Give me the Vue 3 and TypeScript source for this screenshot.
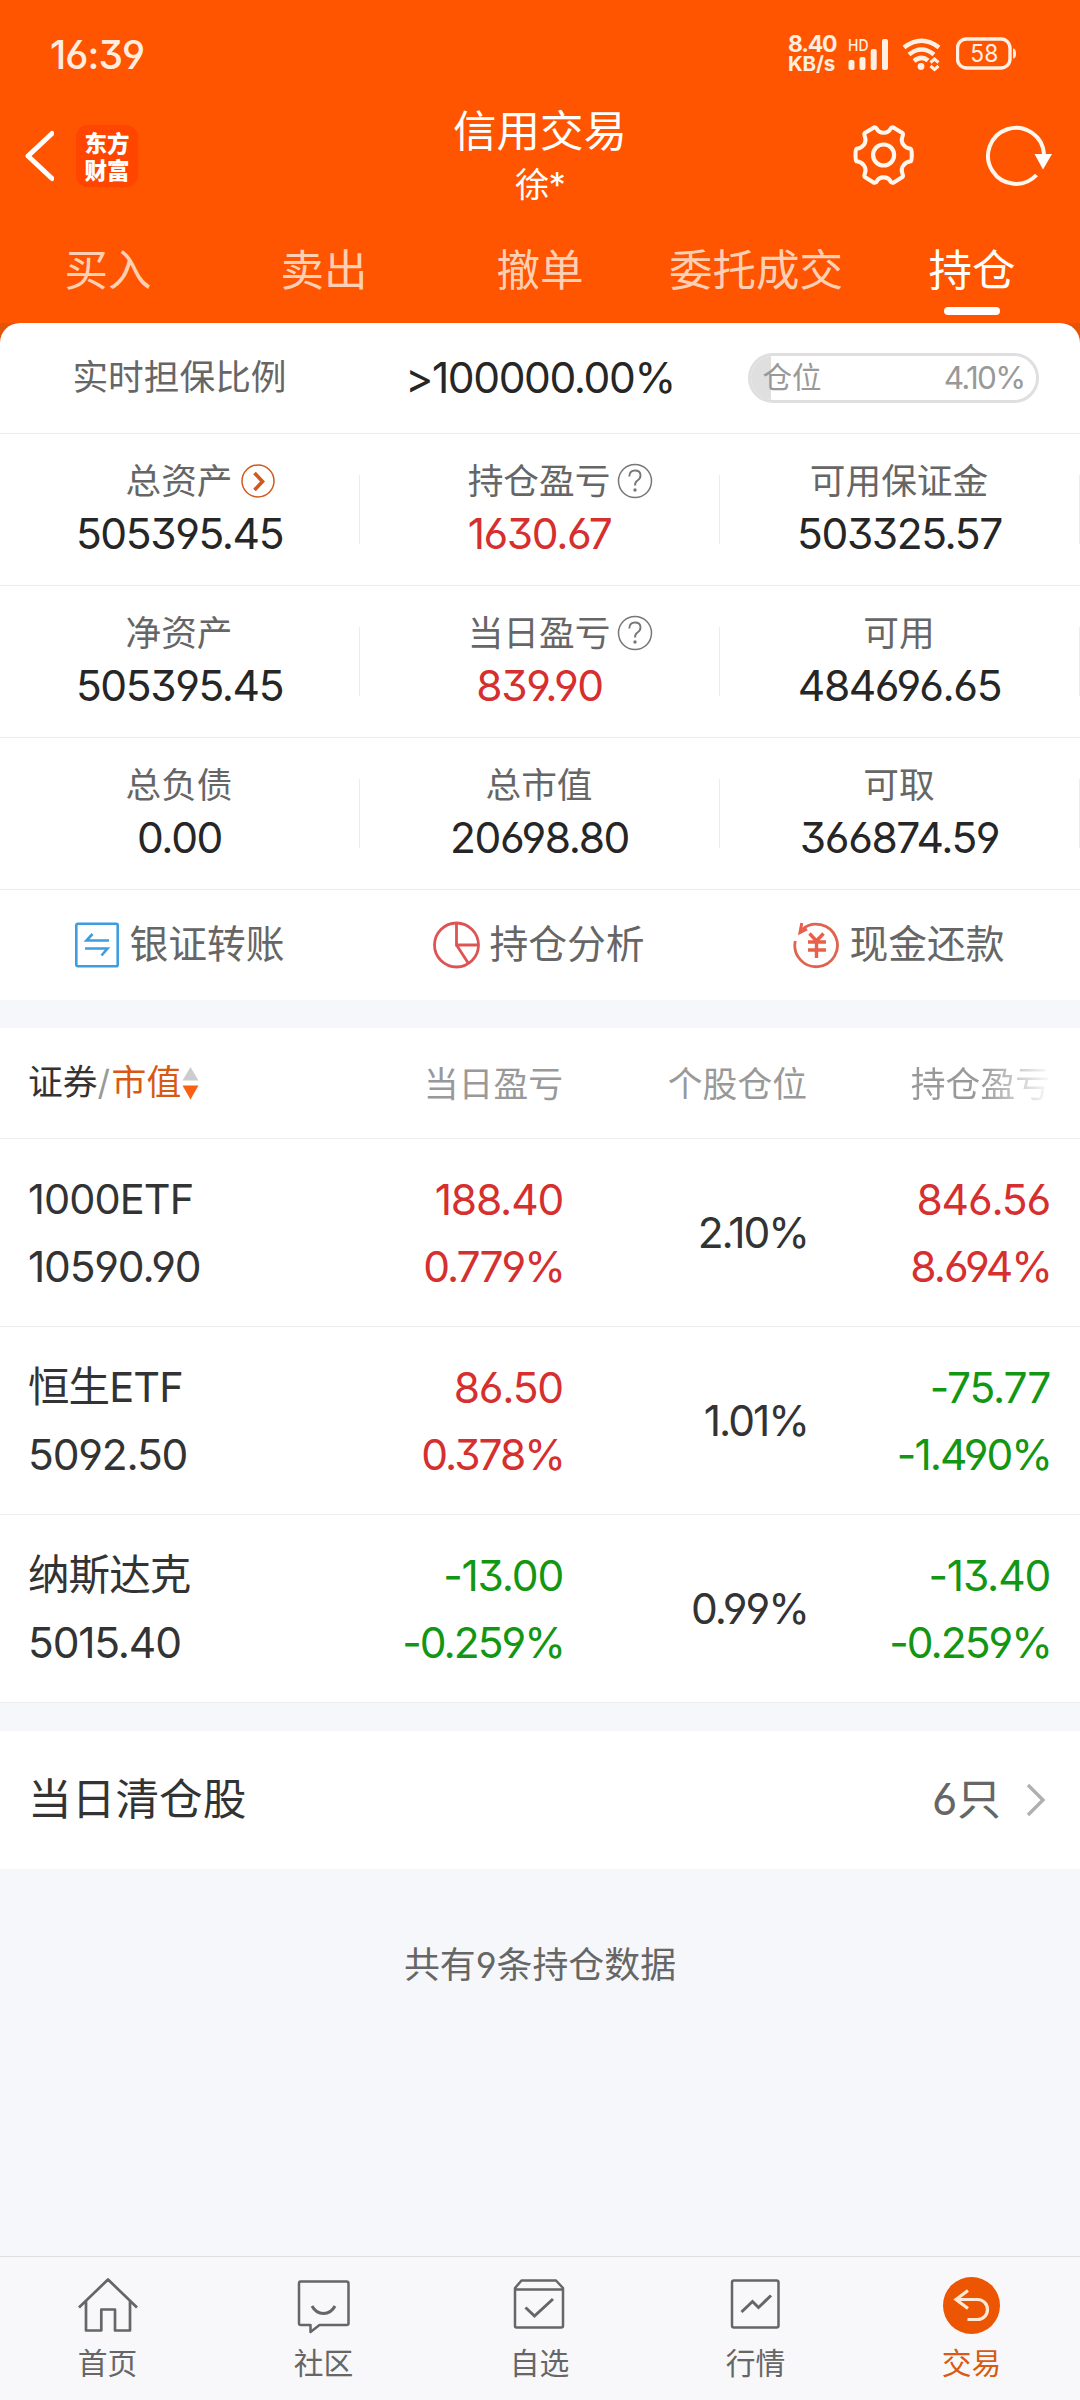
<script setup lang="ts">
interface Metric {
  label: string
  value: string
  tone?: 'up'
  mark?: 'more' | 'help'
}
interface Holding {
  name: string
  amount: string
  day: [string, string]
  share: string
  total: [string, string]
}

const tabs: string[] = ['买入', '卖出', '撤单', '委托成交', '持仓']
const activeTab = '持仓'

const metrics: Metric[][] = [
  [
    { label: '总资产', value: '505395.45', mark: 'more' },
    { label: '持仓盈亏', value: '1630.67', tone: 'up', mark: 'help' },
    { label: '可用保证金', value: '503325.57' },
  ],
  [
    { label: '净资产', value: '505395.45' },
    { label: '当日盈亏', value: '839.90', tone: 'up', mark: 'help' },
    { label: '可用', value: '484696.65' },
  ],
  [
    { label: '总负债', value: '0.00' },
    { label: '总市值', value: '20698.80' },
    { label: '可取', value: '366874.59' },
  ],
]

const holdings: Holding[] = [
  { name: '1000ETF', amount: '10590.90', day: ['188.40', '0.779%'], share: '2.10%', total: ['846.56', '8.694%'] },
  { name: '恒生ETF', amount: '5092.50', day: ['86.50', '0.378%'], share: '1.01%', total: ['-75.77', '-1.490%'] },
  { name: '纳斯达克', amount: '5015.40', day: ['-13.00', '-0.259%'], share: '0.99%', total: ['-13.40', '-0.259%'] },
]

const position = 4.1
const toneOf = (v: string): string[] => [v.startsWith('-') ? 'down' : 'up', v.endsWith('%') ? 'percent' : '']
</script>

<template>
  <div class="screen">
    <header class="top">
      <div class="status">
        <span class="clock">16:39</span>
        <div class="status-right">
          <div class="speed"><span class="rate">8.40</span><span class="unit">KB/s</span></div>
          <svg class="signal" width="42" height="36" viewBox="0 0 42 36" fill="#fff0e4">
            <text x="0" y="15" font-size="16.500" font-weight="500" textLength="20.500" lengthAdjust="spacingAndGlyphs">HD</text>
            <rect x="0.500" y="24" width="6" height="10" rx="2" />
            <rect x="11.500" y="21" width="6" height="13" rx="2" />
            <rect x="22.700" y="13" width="6" height="21" rx="2" />
            <rect x="34" y="3" width="6" height="31" rx="2" />
          </svg>
          <svg class="wifi" width="40" height="36" viewBox="0 0 40 36" fill="none" stroke="#fff0e4" stroke-width="4.600">
            <path d="M2 11.500 Q19.500 -2 37 11.500" />
            <path d="M7 18.500 Q19.500 8.500 32 18.500" />
            <path d="M12 25 Q19.500 19 26 24.500" />
            <circle cx="19" cy="30.500" r="3.400" fill="#fff0e4" stroke="none" />
            <path d="M28.500 26.500 L32.500 23 L36.500 26.500 M28.500 30 L32.500 33.500 L36.500 30" stroke-width="3" />
          </svg>
          <svg class="battery" width="62" height="34" viewBox="0 0 62 34" fill="none">
            <rect x="1.500" y="2" width="52.500" height="29" rx="9" stroke="#fff0e4" stroke-width="3.400" />
            <path d="M57 11.500 Q60 11.500 60 16.500 Q60 21.500 57 21.500 Z" fill="#fff0e4" />
            <text x="28.300" y="25" font-size="24.500" font-weight="400" fill="#fff0e4" text-anchor="middle" textLength="28" lengthAdjust="spacingAndGlyphs">58</text>
          </svg>
        </div>
      </div>

      <div class="titlebar">
        <div class="side">
          <svg class="back" width="34" height="52" viewBox="0 0 34 52" fill="none" stroke="#fff" stroke-width="5" stroke-linecap="round" stroke-linejoin="round">
            <path d="M32 3.500 L8 26 L32 48.500" />
          </svg>
          <div class="logo"><span>东方</span><span>财富</span></div>
        </div>
        <div class="title">
          <h1>信用交易</h1>
          <span>徐*</span>
        </div>
        <div class="side tools">
          <svg width="64" height="64" viewBox="0 0 64 64" fill="none" stroke="#fff6ee" stroke-width="4.200" stroke-linejoin="round">
            <path d="M22 3.500 Q24 3 25 5 Q27 9 32 9 Q37 9 39 5 Q40 3 42 3.500 L51 9 Q52.500 10 51.500 12.500 Q49.500 18 52.500 21.500 Q55 25 60 25.500 Q61 26 61 32 Q61 38 60 38.500 Q55 39 52.500 42.500 Q49.500 46 51.500 51.500 Q52.500 54 51 55 L42 60.500 Q40 61 39 59 Q37 55 32 55 Q27 55 25 59 Q24 61 22 60.500 L13 55 Q11.500 54 12.500 51.500 Q14.500 46 11.500 42.500 Q9 39 4 38.500 Q3 38 3 32 Q3 26 4 25.500 Q9 25 11.500 21.500 Q14.500 18 12.500 12.500 Q11.500 10 13 9 Z" transform="translate(0.600 0) scale(0.970)" />
            <circle cx="31.600" cy="31" r="10.500" />
          </svg>
          <svg width="68" height="64" viewBox="0 0 68 64" fill="none">
            <path d="M60 30 A28 28 0 1 0 52.500 51" stroke="#fff6ee" stroke-width="4" />
            <path d="M50.500 30 L68 30 L59 45.500 Z" fill="#fff" />
          </svg>
        </div>
      </div>

      <nav class="tabs">
        <div v-for="t in tabs" :key="t" class="tab" :class="{ on: t === activeTab }">
          <span>{{ t }}</span>
          <i></i>
        </div>
      </nav>
    </header>

    <section class="card-wrap">
      <div class="card">
        <div class="ratio">
          <span class="ratio-label">实时担保比例</span>
          <span class="num">&gt;100000.00%</span>
          <div class="pill">
            <div class="pill-fill" :style="{ width: position + 3.2 + '%' }"></div>
            <span>仓位</span><span class="pct">4.10%</span>
          </div>
        </div>
        <div v-for="(row, r) in metrics" :key="r" class="metric-row">
          <div v-for="m in row" :key="m.label" class="metric">
            <div class="label">
              {{ m.label }}
              <svg v-if="m.mark === 'more'" class="mark more" width="36" height="36" viewBox="0 0 36 36" fill="none" stroke="#cf5a1c">
                <circle cx="18" cy="18" r="16" stroke-width="1.500" />
                <path d="M14.500 10 L22.500 18.500 L14.500 27" stroke-width="3.600" />
              </svg>
              <svg v-if="m.mark === 'help'" class="mark help" width="36" height="36" viewBox="0 0 36 36" fill="none" stroke="#777">
                <circle cx="18" cy="18" r="16.500" stroke-width="1.500" />
                <path d="M12.300 13.500 Q12.500 7.500 18 7.500 Q23.500 7.500 23.500 12.500 Q23.500 15.500 20.500 17.500 Q18 19 18 22.500" stroke-width="1.900" />
                <circle cx="18" cy="27" r="1.700" fill="#777" stroke="none" />
              </svg>
            </div>
            <div class="num" :class="m.tone">{{ m.value }}</div>
          </div>
        </div>
        <div class="actions">
          <div class="action">
            <svg width="48" height="48" viewBox="0 0 48 48" fill="none" stroke="#3f9ddd" stroke-width="2.600">
              <rect x="3.300" y="2.800" width="41.400" height="42.500" rx="1.500" />
              <path d="M36 19.500 H13.500 L19.500 13 M12 27.500 H34.500 L28.500 34.500" />
            </svg>
            <span>银证转账</span>
          </div>
          <div class="action">
            <svg width="48" height="48" viewBox="0 0 48 48" fill="none" stroke="#dd5454" stroke-width="2.800">
              <circle cx="23.500" cy="24" r="22" />
              <path d="M23.500 2 V24 H45.500 M23.500 24 L35.500 42.500" />
            </svg>
            <span>持仓分析</span>
          </div>
          <div class="action">
            <svg width="48" height="48" viewBox="0 0 48 48" fill="none" stroke="#e8604a" stroke-width="2.800">
              <path d="M9 8.500 A21.300 21.300 0 1 1 2.300 20" stroke="#e06350" />
              <path d="M8.800 2 L7 11.500 L14 8" stroke-width="3" />
              <path d="M16.500 12.500 L23.500 20 L30.500 12.500 M15 21 H33 M15 29 H33 M23.500 20 V37" stroke-width="3.400" />
            </svg>
            <span>现金还款</span>
          </div>
        </div>
      </div>
    </section>

    <section class="table">
      <div class="thead">
        <div class="c1 sort">
          <span class="dark">证券</span><span class="slash">/</span><span class="orange">市值</span>
          <svg width="17" height="34" viewBox="0 0 17 34">
            <path d="M8.500 1 L16.500 14.500 H0.500 Z" fill="#ccc" />
            <path d="M8.500 33.500 L16.500 19.500 H0.500 Z" fill="#f96014" />
          </svg>
        </div>
        <div class="c2">当日盈亏</div>
        <div class="c3">个股仓位</div>
        <div class="c4 fade">持仓盈亏</div>
      </div>
      <div v-for="h in holdings" :key="h.name" class="trow">
        <div class="c1 pair"><span class="name">{{ h.name }}</span><span>{{ h.amount }}</span></div>
        <div class="c2 pair"><span v-for="v in h.day" :key="v" :class="toneOf(v)">{{ v }}</span></div>
        <div class="c3"><span class="percent">{{ h.share }}</span></div>
        <div class="c4 pair"><span v-for="v in h.total" :key="v" :class="toneOf(v)">{{ v }}</span></div>
      </div>
    </section>

    <section class="cleared">
      <span>当日清仓股</span>
      <div class="count">
        <span>6只</span>
        <svg width="20" height="34" viewBox="0 0 20 34" fill="none" stroke="#b0b0b0" stroke-width="3.400">
          <path d="M2 2 L17 17 L2 32" />
        </svg>
      </div>
    </section>

    <p class="summary">共有9条持仓数据</p>

    <nav class="dock">
      <div class="dock-item">
        <svg width="64" height="60" viewBox="0 0 64 60" fill="none" stroke="#666" stroke-width="2.700">
          <path d="M3 32.500 L32 4.500 L61 32.500 M10 26.500 V55.500 H25.300 V34.500 H39 V55.500 H54 V26.500" stroke-linejoin="round" />
        </svg>
        <span>首页</span>
      </div>
      <div class="dock-item">
        <svg width="64" height="60" viewBox="0 0 64 60" fill="none" stroke="#666" stroke-width="2.500">
          <path d="M8.500 6.500 H54.500 Q56.500 6.500 56.500 8.500 V48.500 Q56.500 50 54.500 50 H27.500 L18.500 57 V50 H9 Q7 50 7 48.500 V8.500 Q7 6.500 8.500 6.500 Z" stroke-linejoin="round" />
          <path d="M20 31 Q24 38.500 31.500 38.500 Q39 38.500 43 31" stroke-width="3" />
        </svg>
        <span>社区</span>
      </div>
      <div class="dock-item">
        <svg width="64" height="60" viewBox="0 0 64 60" fill="none" stroke="#666" stroke-width="2.500" stroke-linejoin="round">
          <path d="M13.500 5.500 H48 L55 13 V51 Q55 52.500 53 52.500 H8.500 Q7 52.500 7 51 V13 Z M7 14.500 H55" />
          <path d="M17.500 32.500 L26.500 41 L45 24" stroke-width="3" stroke-linejoin="miter" />
        </svg>
        <span>自选</span>
      </div>
      <div class="dock-item">
        <svg width="64" height="60" viewBox="0 0 64 60" fill="none" stroke="#666" stroke-width="2.500">
          <rect x="8" y="5.500" width="46.500" height="47" rx="2" />
          <path d="M17.500 37 L28.500 26.500 L34.500 32.500 L47 20.500" stroke-width="3" />
        </svg>
        <span>行情</span>
      </div>
      <div class="dock-item on">
        <svg width="64" height="60" viewBox="0 0 64 60" fill="none">
          <circle cx="31.500" cy="30.500" r="28.500" fill="#ec5502" />
          <path d="M28 15.500 L16 24.500 L28 33.500 M16 24.500 H37.500 A10 10 0 0 1 37.500 44.500 H27.500" stroke="#ffe9d6" stroke-width="3.200" />
        </svg>
        <span>交易</span>
      </div>
    </nav>
  </div>
</template>

<style>
body {
  margin: 0;
  background: #f7f8fa;
}
</style>

<style scoped>
.screen {
  width: 1080px;
  height: 2400px;
  display: flex;
  flex-direction: column;
  background: #f6f7fa;
  font-family: Inter, 'Noto Sans CJK SC', sans-serif;
  font-feature-settings: 'cv03', 'cv04', 'cv09';
  color: #333;
  overflow: hidden;
}
svg {
  display: block;
  flex: none;
}
.top {
  height: 323px;
  background: #ff5500;
  color: #fff;
  display: flex;
  flex-direction: column;
}
.status {
  height: 68px;
  padding: 20px 62px 0 50px;
  display: flex;
  align-items: center;
  justify-content: space-between;
}
.clock {
  font-size: 39px;
  font-weight: 500;
  line-height: 44px;
  letter-spacing: -0.900px;
  color: #ffeee0;
  padding-top: 2px;
}
.status-right {
  display: flex;
  align-items: center;
}
.speed {
  display: flex;
  flex-direction: column;
  font-weight: 700;
  color: #ffeee0;
  margin-right: 11px;
  width: 49px;
}
.rate {
  font-size: 23px;
  line-height: 19px;
  letter-spacing: -1.200px;
}
.unit {
  font-size: 20.500px;
  line-height: 20px;
  letter-spacing: -0.200px;
}
.signal {
  margin-right: 12px;
}
.wifi {
  margin-right: 14px;
}
.titlebar {
  height: 136px;
  padding: 0 28px 0 20px;
  display: flex;
  justify-content: space-between;
}
.side {
  width: 240px;
  height: 96px;
  display: flex;
  align-items: center;
}
.back {
  margin-right: 22px;
}
.titlebar .side {
  padding-top: 20px;
}
.logo {
  width: 62px;
  height: 62px;
  border-radius: 12px;
  background: #ff4500;
  display: flex;
  flex-direction: column;
  align-items: center;
  justify-content: center;
  font-size: 22.500px;
  font-weight: 900;
  line-height: 27px;
  font-family: 'Noto Sans CJK SC', sans-serif;
}
.title {
  display: flex;
  flex-direction: column;
  align-items: center;
  padding-top: 17px;
  margin-left: 8px;
}
.title h1 {
  margin: 0;
  font-size: 43.500px;
  font-weight: 400;
  line-height: 52px;
}
.title span {
  font-size: 34.500px;
  line-height: 56px;
  letter-spacing: -1px;
}
.tools {
  justify-content: flex-end;
  gap: 68px;
}
.tabs {
  height: 99px;
  display: flex;
}
.tab {
  width: 216px;
  display: flex;
  flex-direction: column;
  align-items: center;
  padding-top: 20px;
  font-size: 43.500px;
  line-height: 52px;
  color: #ffcfb4;
}
.tab i {
  width: 56px;
  height: 8px;
  border-radius: 4px;
  margin-top: 11px;
}
.tab.on {
  color: #fff;
}
.tab.on i {
  background: #fff;
}
.card-wrap {
  background: linear-gradient(#e35406 40px, #fff 40px);
}
.card {
  background: #fff;
  border-radius: 20px 20px 0 0;
}
.ratio {
  height: 110px;
  border-bottom: 1px solid #ececec;
  display: grid;
  grid-template-columns: 360px 360px 360px;
  align-items: center;
  justify-items: center;
}
.ratio-label {
  font-size: 35.700px;
  line-height: 52px;
  padding-bottom: 2px;
  margin-left: -1px;
  color: #666;
}
.num {
  font-size: 42.500px;
  line-height: 52px;
  letter-spacing: -1.400px;
  color: #262626;
}
.pill {
  position: relative;
  box-sizing: border-box;
  width: 291px;
  height: 50px;
  margin-left: -14px;
  border: 3px solid #dfdfdf;
  border-radius: 25px;
  overflow: hidden;
  display: flex;
  align-items: center;
  justify-content: space-between;
  padding: 0 11px 0 12px;
  font-size: 29.500px;
  line-height: 42px;
  color: #999;
}
.pill span {
  position: relative;
  padding-bottom: 2px;
}
.pill .pct {
  font-size: 31.500px;
  letter-spacing: -1.700px;
  padding-bottom: 0;
}
.pill-fill {
  position: absolute;
  left: 0;
  top: 0;
  bottom: 0;
  background: #dfdfdf;
}
.metric-row {
  height: 151px;
  border-bottom: 1px solid #ececec;
  display: flex;
  align-items: center;
}
.metric {
  width: 359px;
  border-right: 1px solid #ececec;
  height: 69px;
  display: flex;
  flex-direction: column;
  align-items: center;
  justify-content: center;
}
.label {
  position: relative;
  font-size: 35.700px;
  line-height: 52px;
  margin: -4px 1px 1px 0;
  color: #666;
}
.mark {
  position: absolute;
  left: 100%;
  top: 8px;
}
.more {
  margin-left: 7px;
}
.help {
  margin-left: 6.500px;
}
.num.up,
.up {
  color: #d62f2f;
}
.down {
  color: #139613;
}
.actions {
  height: 110px;
  display: flex;
  align-items: center;
}
.action {
  width: 358px;
  margin-right: 2px;
  display: flex;
  align-items: center;
  justify-content: center;
  gap: 8px;
  font-size: 38.800px;
  line-height: 52px;
  color: #666;
}
.action span {
  padding-bottom: 2px;
}
.table {
  margin-top: 28px;
  background: #fff;
}
.thead,
.trow {
  display: flex;
  align-items: center;
  padding: 0 30px 0 28px;
  border-bottom: 1px solid #ececec;
}
.thead {
  height: 110px;
  font-size: 34.800px;
  line-height: 52px;
  color: #999;
}
.thead > .c2,
.thead > .c3,
.thead > .c4 {
  padding-top: 2px;
}
.trow {
  height: 187px;
  font-size: 42.500px;
  letter-spacing: -1.200px;
}
.name {
  font-size: 41.500px;
  letter-spacing: -0.900px;
}
.percent {
  letter-spacing: -2px;
  margin-right: -1px;
}
.c1 {
  width: 252px;
}
.c2 {
  width: 283px;
  text-align: right;
}
.c3 {
  width: 244px;
  text-align: right;
}
.c4 {
  width: 243px;
  text-align: right;
}
.sort {
  display: flex;
  align-items: center;
}
.sort span {
  padding-bottom: 2px;
}
.dark {
  color: #333;
}
.slash {
  width: 14px;
}
.orange {
  color: #d75a14;
}
.sort svg {
  margin-left: 1px;
}
.fade {
  background: linear-gradient(90deg, #999 72%, rgba(153, 153, 153, 0.08) 99%);
  background-clip: text;
  color: transparent;
}
.pair {
  display: flex;
  flex-direction: column;
  line-height: 67px;
}
.cleared {
  margin-top: 28px;
  height: 138px;
  padding: 0 34px 0 28px;
  background: #fff;
  display: flex;
  align-items: center;
  justify-content: space-between;
  font-size: 43.700px;
  line-height: 56px;
}
.cleared span {
  padding-bottom: 1px;
}
.count {
  display: flex;
  align-items: center;
  gap: 25px;
  color: #666;
}
.summary {
  margin: 70px 0 0;
  text-align: center;
  font-size: 35.900px;
  line-height: 52px;
  color: #666;
}
.dock {
  margin-top: auto;
  box-sizing: border-box;
  height: 144px;
  border-top: 1px solid #dedfe1;
  background: #f8f8fa;
  display: flex;
}
.dock-item {
  width: 216px;
  display: flex;
  flex-direction: column;
  align-items: center;
  padding-top: 18px;
  font-size: 29.800px;
  line-height: 40px;
  color: #666;
}
.dock-item span {
  margin: 8px 1px 0 0;
}
.dock-item.on {
  color: #d95a14;
}
</style>
